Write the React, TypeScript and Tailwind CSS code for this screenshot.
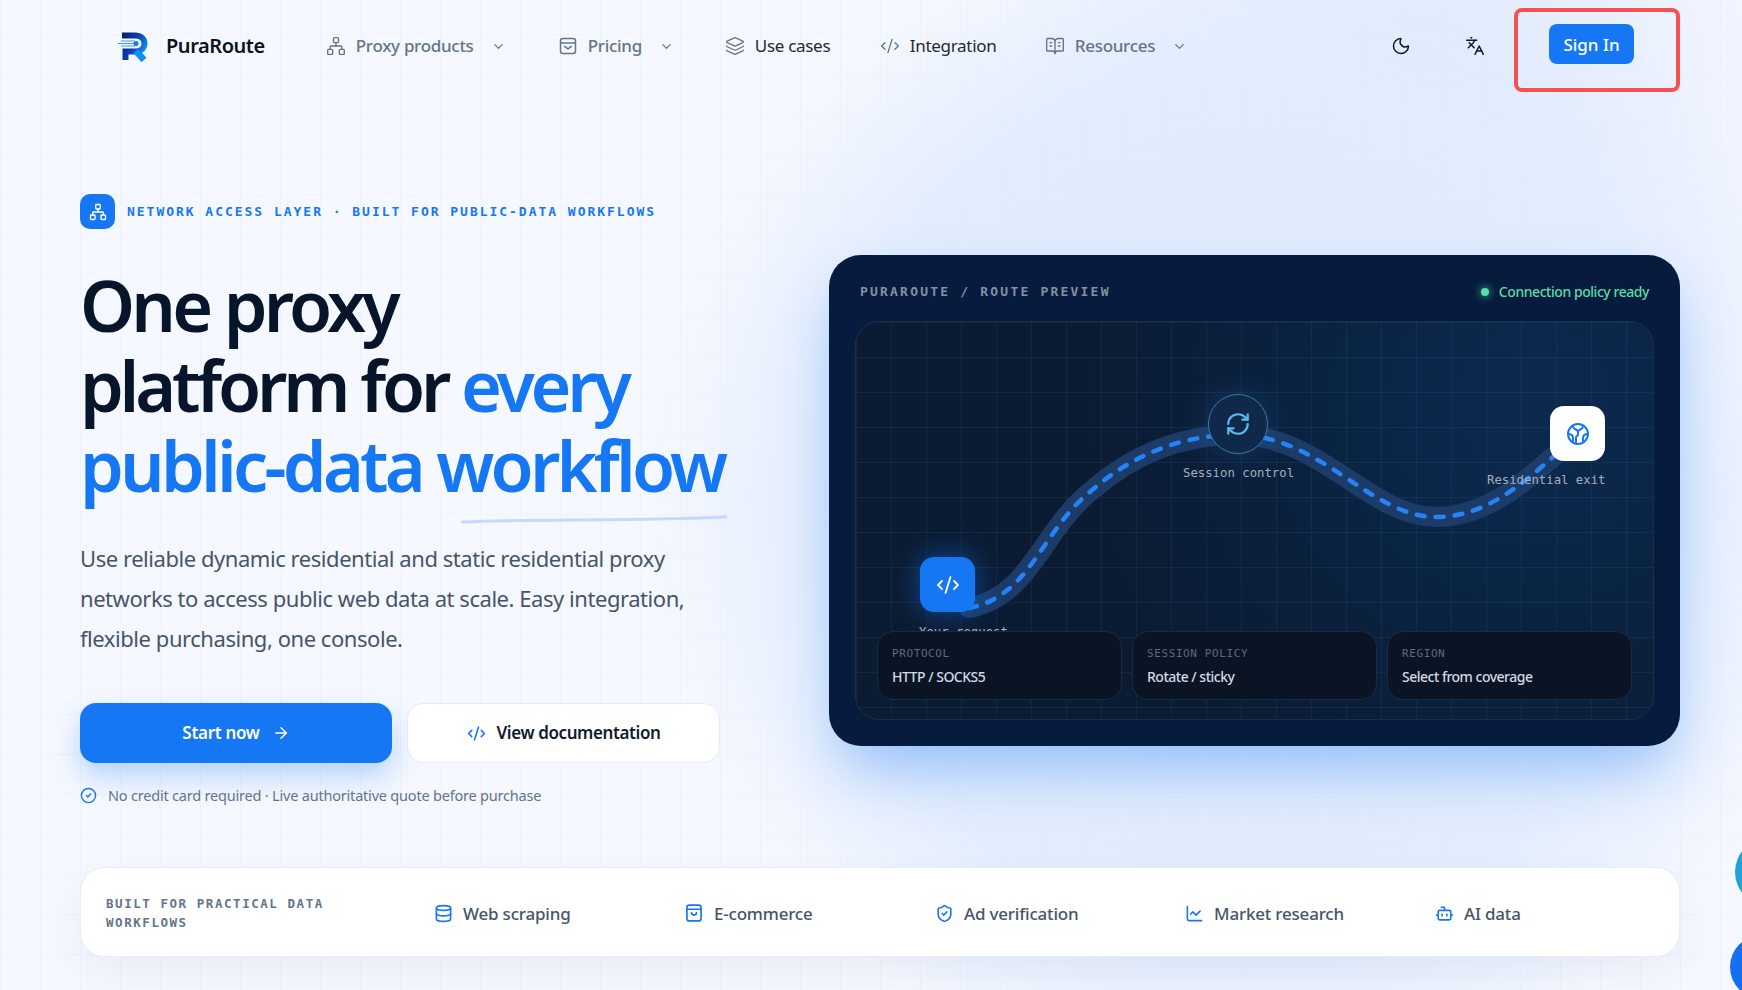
import { ArrowRight, Bot, BookOpenText, ChartLine, ChevronDown, CircleCheck, CodeXml, Database, Languages, Layers, Moon, Network, RefreshCw, ShieldCheck } from 'lucide-react';
import type { ReactNode } from 'react';

const ROUTE = 'M113 286C175 274 185 209 235 169C275 134 325 112 383 113C465 114 515 195 580 195C635 195 675 154 715 119';

function NavItem({ icon, label, caret, dark, width }: { icon: ReactNode; label: string; caret?: boolean; dark?: boolean; width: string }) {
  return (
    <div className={`flex items-center ${width}`}>
      <span className="text-[#64748b] w-[20px] flex justify-center">{icon}</span>
      <span className={`ml-[10px] text-[17px] tracking-[-0.3px] ${dark ? 'font-normal text-[#1e293b]' : 'font-medium text-[#64748b]'}`}>{label}</span>
      {caret && <ChevronDown size={15} className="ml-[17px] text-[#64748b]" />}
    </div>
  );
}

function Logo() {
  return (
    <svg width="34" height="32" viewBox="0 0 34 32" fill="none">
      <defs>
        <linearGradient id="lg" x1="0" y1="0" x2="1" y2="0.600">
          <stop offset="0" stopColor="#0a1f66" />
          <stop offset="0.550" stopColor="#0b3cb0" />
          <stop offset="1" stopColor="#0f8cf5" />
        </linearGradient>
      </defs>
      <path d="M6 5.500H19C25 5.500 28.500 9 28.500 13.500C28.500 18 25 21.500 19 21.500H9.500V30" stroke="url(#lg)" strokeWidth="6" />
      <path d="M20 21L28 30" stroke="#0f8cf5" strokeWidth="6.500" />
      <path d="M2 13.500H20M5 11H19M5 16H19" stroke="#3b9bf5" strokeWidth="1.200" />
      <circle cx="20" cy="13.500" r="2.500" fill="#1677f5" />
    </svg>
  );
}

function BoxIcon({ size }: { size: number }) {
  return (
    <svg width={size} height={size} viewBox="0 0 24 24" fill="none" stroke="currentColor" strokeWidth="1.800" strokeLinecap="round" strokeLinejoin="round">
      <rect x="3" y="3" width="18" height="18" rx="3" />
      <path d="M3 8.500H21M8 12.500L12 15.500L16 12.500" />
    </svg>
  );
}

function BagIcon() {
  return (
    <svg width="20" height="20" viewBox="0 0 24 24" fill="none" stroke="currentColor" strokeWidth="2" strokeLinecap="round" strokeLinejoin="round">
      <rect x="3.500" y="2.500" width="17" height="19" rx="3" />
      <path d="M3.500 7.500H20.500M9 11.500C9 15.500 15 15.500 15 11.500" />
    </svg>
  );
}

function Stat({ label, value }: { label: string; value: string }) {
  return (
    <div className="flex-1 h-[69px] rounded-[16px] border border-[#1c2a3f] bg-[#0a1424] pl-[14px] pt-[15px]">
      <div className="font-['DejaVu_Sans_Mono',monospace] text-[11px] leading-[14px] text-[#5d6b7d] tracking-[0.6px]">{label}</div>
      <div className="mt-[6px] text-[14px] leading-[20px] font-medium tracking-[-0.5px] text-[#d3d9e2]">{value}</div>
    </div>
  );
}

function UseCase({ icon, label, width }: { icon: ReactNode; label: string; width: string }) {
  return (
    <div className={`flex items-center gap-[10px] ${width}`}>
      <span className="text-[#1677f5]">{icon}</span>
      <span className="text-[17px] font-medium tracking-[-0.2px] text-[#475569]">{label}</span>
    </div>
  );
}

export default function App() {
  return (
    <div className="relative h-[990px] w-[1742px] overflow-hidden bg-[#f5f8ff] font-['Noto_Sans',sans-serif]">
      {/* background wash + grid */}
      <div className="absolute inset-0 bg-[radial-gradient(circle_at_1420px_90px,#dfe9fc_0,#e8effd_180px,rgba(245,248,255,0)_420px)]" />
      <div className="absolute inset-0 bg-[radial-gradient(circle_at_1250px_500px,#dbe8fd_0,#e2ecfd_420px,rgba(245,248,255,0)_600px)]" />
      <div className="absolute inset-0 bg-[linear-gradient(#e9effc_1px,transparent_1px),linear-gradient(90deg,#e9effc_1px,transparent_1px)] bg-[size:40px_40px] bg-[position:0_-6px] opacity-50" />

      <div className="relative">
        <header className="flex h-[92px] items-center pl-[116px] pr-[62px]">
          <Logo />
          <span className="ml-[16px] text-[20px] font-semibold tracking-[-0.45px] text-[#0b1220]">PuraRoute</span>
          <nav className="ml-[61px] flex items-center">
            <NavItem width="w-[232px]" icon={<Network size={20} strokeWidth={1.6} />} label="Proxy products" caret />
            <NavItem width="w-[167px]" icon={<BoxIcon size={20} />} label="Pricing" caret />
            <NavItem width="w-[155px]" icon={<Layers size={20} strokeWidth={1.6} />} label="Use cases" dark />
            <NavItem width="w-[165px]" icon={<CodeXml size={20} strokeWidth={1.6} />} label="Integration" dark />
            <NavItem width="w-[160px]" icon={<BookOpenText size={20} strokeWidth={1.6} />} label="Resources" caret />
          </nav>
          <div className="ml-auto flex items-center">
            <Moon size={20} strokeWidth={1.8} className="text-[#111827]" />
            <Languages size={20} strokeWidth={1.8} className="ml-[54px] text-[#111827]" />
            <div className="ml-[29px] mt-[8px] h-[84px] w-[166px] rounded-[8px] border-[4px] border-[#f55151] pl-[31px] pt-[12px]">
              <button className="h-[40px] w-[85px] rounded-[8px] bg-[#1677f5] pt-[1px] text-[17px] font-medium text-white">Sign In</button>
            </div>
          </div>
        </header>

        <main className="flex items-start justify-between pl-[80px] pr-[62px] pt-[102px]">
          {/* hero copy */}
          <div className="w-[660px]">
            <div className="flex items-center gap-[12px]">
              <span className="flex h-[35px] w-[35px] items-center justify-center rounded-[10px] bg-[#1677f5] text-white">
                <Network size={18} strokeWidth={1.8} />
              </span>
              <span className="font-['DejaVu_Sans_Mono',monospace] text-[13px] font-bold tracking-[1.97px] text-[#1677f5]">NETWORK ACCESS LAYER · BUILT FOR PUBLIC-DATA WORKFLOWS</span>
            </div>
            <h1 className="mt-[36px] whitespace-nowrap text-[70px] font-semibold leading-[80px] tracking-[-3.800px] text-[#07152a]">
              One proxy
              <br />
              <span className="tracking-[-4.200px]">
                platform for <span className="text-[#1677f5]">every</span>
              </span>
              <br />
              <span className="relative text-[#1677f5]">
                public-data workflow
                <svg className="absolute right-[-3px] bottom-[-12px]" width="266" height="10" viewBox="0 0 266 10" fill="none">
                  <path d="M1 7C70 4 180 6 265 2" stroke="#c2dafc" strokeWidth="3" strokeLinecap="round" />
                </svg>
              </span>
            </h1>
            <p className="mt-[33px] w-[640px] text-[22px] leading-[40px] tracking-[-0.45px] text-[#475569]">
              Use reliable dynamic residential and static residential proxy networks to access public web data at scale. Easy integration, flexible purchasing, one console.
            </p>
            <div className="mt-[45px] flex gap-[15px]">
              <button className="flex h-[60px] w-[312px] items-center justify-center gap-[12px] rounded-[16px] bg-[#1677f5] text-[17px] font-semibold tracking-[-0.3px] text-white shadow-[0_14px_28px_rgba(22,119,245,0.28)]">
                Start now <ArrowRight size={18} />
              </button>
              <button className="flex h-[60px] w-[313px] items-center justify-center gap-[11px] rounded-[16px] border border-[#e2eafa] bg-white text-[17px] font-semibold tracking-[-0.4px] text-[#0f1b2e]">
                <CodeXml size={19} className="text-[#1677f5]" /> View documentation
              </button>
            </div>
            <div className="mt-[22px] flex items-center gap-[11px] text-[14.500px] tracking-[-0.2px] text-[#64748b]">
              <CircleCheck size={17} className="text-[#1677f5]" />
              No credit card required · Live authoritative quote before purchase
            </div>
          </div>

          {/* route preview card */}
          <div className="mt-[61px] h-[491px] w-[851px] rounded-[32px] bg-[#061b3d] px-[26px] shadow-[0_30px_60px_-10px_rgba(22,119,245,0.4)]">
            <div className="flex h-[66px] items-center justify-between pl-[5px] pr-[5px] pt-[7px]">
              <span className="font-['DejaVu_Sans_Mono',monospace] text-[13px] font-bold tracking-[2.200px] text-[#8490a3]">PURAROUTE / ROUTE PREVIEW</span>
              <span className="flex items-center gap-[10px] text-[14px] font-medium tracking-[-0.45px] text-[#58dcab]">
                <span className="h-[8px] w-[8px] rounded-full bg-[#58dcab] shadow-[0_0_8px_#58dcab]" />
                Connection policy ready
              </span>
            </div>
            <div className="relative h-[399px] overflow-hidden rounded-[24px] border border-[#1c2e49] bg-[radial-gradient(circle_at_85%_20%,#0c2a50_0,#0a2444_25%,#0b1b32_60%)]">
              <div className="absolute inset-0 bg-[linear-gradient(rgba(90,140,200,0.1)_1px,transparent_1px),linear-gradient(90deg,rgba(90,140,200,0.1)_1px,transparent_1px)] bg-[size:35px_35px]" />
              <svg className="absolute inset-0" width="799" height="399" viewBox="0 0 799 399" fill="none">
                <path d={ROUTE} stroke="#1c3b66" strokeWidth="20" strokeLinecap="round" />
                <path d={ROUTE} stroke="#2583f7" strokeWidth="4.500" strokeLinecap="round" strokeDasharray="8 11" />
              </svg>

              {/* route nodes */}
              <div className="absolute left-[64px] top-[235px] flex h-[55px] w-[55px] items-center justify-center rounded-[14px] bg-[#1677f5] text-white shadow-[0_0_30px_rgba(22,119,245,0.55)]">
                <CodeXml size={24} strokeWidth={1.8} />
              </div>
              <span className="absolute left-[63px] top-[301px] font-['DejaVu_Sans_Mono',monospace] text-[12.300px] text-[#a6aebb]">Your request</span>

              <div className="absolute left-[352px] top-[72px] flex h-[60px] w-[60px] items-center justify-center rounded-full border border-[#3a7aa6] bg-[#10294a] text-[#5ab9ee] shadow-[0_0_30px_rgba(60,140,220,0.22)]">
                <RefreshCw size={26} strokeWidth={2} />
              </div>
              <span className="absolute left-[327px] top-[142px] font-['DejaVu_Sans_Mono',monospace] text-[12.300px] text-[#a6aebb]">Session control</span>

              <div className="absolute left-[694px] top-[84px] flex h-[55px] w-[55px] items-center justify-center rounded-[14px] bg-white text-[#1677f5]">
                <svg width="24" height="24" viewBox="0 0 24 24" fill="none" stroke="currentColor" strokeWidth="2" strokeLinecap="round" strokeLinejoin="round">
                  <circle cx="12" cy="12" r="10" />
                  <path d="M6.500 4C8 8 11 7 12 9.500C13 7 16 8 17.500 4M12 9.500V13L10 15V21.500M2 12C5 12 7 13 7 16V19M22 12C19 12 17 13 17 16V19" />
                </svg>
              </div>
              <span className="absolute left-[631px] top-[149px] font-['DejaVu_Sans_Mono',monospace] text-[12.300px] text-[#a6aebb]">Residential exit</span>

              <div className="absolute inset-x-[21px] bottom-[19px] flex gap-[10px]">
                <Stat label="PROTOCOL" value="HTTP / SOCKS5" />
                <Stat label="SESSION POLICY" value="Rotate / sticky" />
                <Stat label="REGION" value="Select from coverage" />
              </div>
            </div>
          </div>
        </main>

        <section className="ml-[80px] mr-[62px] mt-[60px] flex h-[90px] items-center rounded-[24px] border border-[#e6edfb] bg-white pl-[25px] pt-[3px] shadow-[0_16px_36px_rgba(30,60,120,0.06)]">
          <div className="w-[328px] pr-[100px] font-['DejaVu_Sans_Mono',monospace] text-[12.500px] font-bold leading-[19px] tracking-[1.550px] text-[#64748b]">BUILT FOR PRACTICAL DATA WORKFLOWS</div>
          <UseCase icon={<Database size={19} />} label="Web scraping" width="w-[250px]" />
          <UseCase icon={<BagIcon />} label="E-commerce" width="w-[251px]" />
          <UseCase icon={<ShieldCheck size={19} />} label="Ad verification" width="w-[250px]" />
          <UseCase icon={<ChartLine size={19} />} label="Market research" width="w-[250px]" />
          <UseCase icon={<Bot size={19} />} label="AI data" width="w-[120px]" />
        </section>
      </div>

      {/* floating help buttons, cut by the window edge */}
      <div className="absolute left-[1735px] top-[838px] h-[68px] w-[68px] rounded-full bg-[#1fa2d8]" />
      <div className="absolute left-[1730px] top-[935px] h-[64px] w-[64px] rounded-full bg-[#1570f0]" />
    </div>
  );
}
